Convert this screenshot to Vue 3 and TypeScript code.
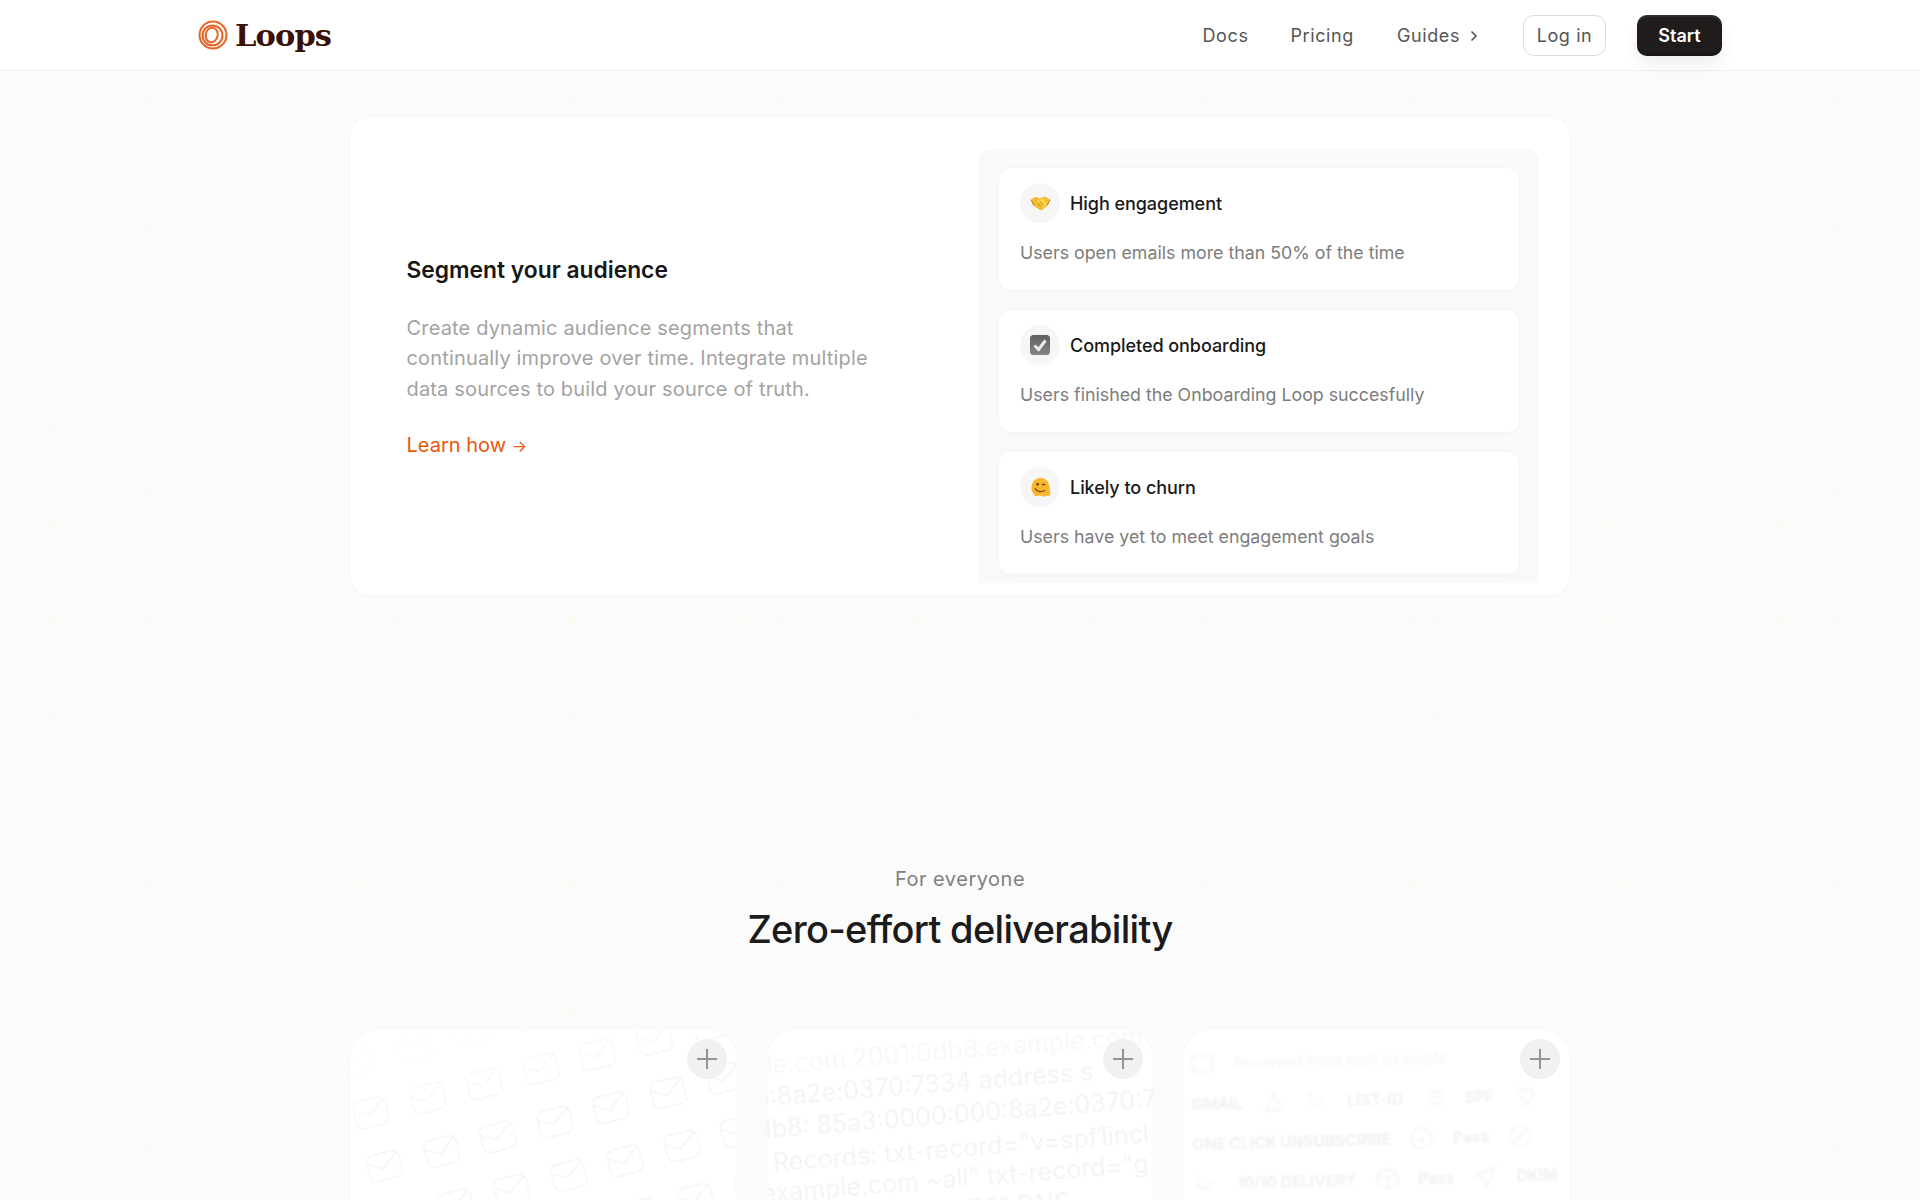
<script setup lang="ts">
interface Segment { title: string; desc: string; icon: 'hands' | 'check' | 'melt' }
const segments: Segment[] = [
  { title: 'High engagement', desc: 'Users open emails more than 50% of the time', icon: 'hands' },
  { title: 'Completed onboarding', desc: 'Users finished the Onboarding Loop succesfully', icon: 'check' },
  { title: 'Likely to churn', desc: 'Users have yet to meet engagement goals', icon: 'melt' },
]
const envelopes = Array.from({ length: 64 }, (_, i) => i)
const records = [
  'ple.com 2001:0db8:example.com',
  '0:8a2e:0370:7334 address s',
  'db8: 85a3:0000:000:8a2e:0370:7',
  '  Records: txt-record="v=spf1incl',
  'example.com ~all" txt-record="g',
  '                 ="123456" DNS',
]
</script>

<template>
  <div class="page">
    <header class="topbar">
      <div class="topbar-inner">
        <a class="brand">
          <svg class="brand-mark" viewBox="0 0 32 32" fill="none" stroke="#e4672a" stroke-width="2.200">
            <circle cx="16" cy="16" r="14.400" />
            <ellipse cx="15.500" cy="16.400" rx="10.600" ry="10.600" />
            <ellipse cx="14.600" cy="16" rx="6.400" ry="7.800" transform="rotate(12 14.600 16)" />
          </svg>
          <span class="brand-name">Loops</span>
        </a>
        <nav class="nav">
          <a class="nav-link first">Docs</a>
          <a class="nav-link">Pricing</a>
          <a class="nav-link guides">Guides
            <svg viewBox="0 0 10 14" class="chev" fill="none" stroke="#4c4c4c" stroke-width="1.500"><path d="M2.500 2.500 7 7l-4.500 4.500" /></svg>
          </a>
          <a class="btn-login">Log in</a>
          <a class="btn-start">Start</a>
        </nav>
      </div>
    </header>

    <main class="main">
      <section class="feature">
        <div class="feature-copy">
          <h3>Segment your audience</h3>
          <p>Create dynamic audience segments that continually improve over time. Integrate multiple data sources to build your source of truth.</p>
          <a class="learn">Learn how <span class="arrow">→</span></a>
        </div>
        <div class="panel">
          <article v-for="s in segments" :key="s.title" class="seg">
            <div class="seg-head">
              <span class="seg-icon">
                <svg v-if="s.icon === 'hands'" viewBox="0 0 22 16" width="21" height="16">
                  <path d="M1 4.500 5.500 1.500 10 3l2-.8L16.500 1.500 21 4.500l-2.500 6-5.500 4.500c-1 .6-2 .6-3 0L3.500 10.500z" fill="#f5b82e" />
                  <path d="M6 6.500 11 3.500l3.500 0 4 6-4.500 3.500" fill="#fcd34d" />
                  <path d="M8 8l4 3.500M10 6.500l4.500 4M1 4.500l3 6M21 4.500l-3 6" stroke="#b9770e" stroke-width=".9" fill="none" />
                </svg>
                <svg v-else-if="s.icon === 'check'" viewBox="0 0 20 20" width="20" height="20">
                  <defs>
                    <linearGradient id="boxfill" x1="0" y1="0" x2="0" y2="1">
                      <stop offset="0" stop-color="#5f5f5f" />
                      <stop offset="1" stop-color="#858585" />
                    </linearGradient>
                  </defs>
                  <rect width="20" height="20" rx="3.500" fill="url(#boxfill)" />
                  <path d="M4.500 10.500 8.500 14.500 15.500 5.500" fill="none" stroke="#ececec" stroke-width="3" />
                </svg>
                <svg v-else viewBox="0 0 20 20" width="21" height="21">
                  <path d="M10 .8a8.600 8.600 0 0 1 8.600 8.600c0 3 .9 4.600.9 6.600 0 1.500-1.700 2.600-3.300 1.800-1-.5-1.700.9-3.300.9-1.500 0-2-1-3.400-1-1.700 0-2.500 1-4 .5C3.200 17.500 4 16 2.800 15 1.600 14 1.400 11.500 1.400 9.400A8.600 8.600 0 0 1 10 .8z" fill="#f8b62d" />
                  <path d="M4.700 10.800c1.600 3.500 6.800 4.200 9.800 1.700" fill="none" stroke="#7b4a0c" stroke-width="1.200" />
                  <circle cx="7.300" cy="6.800" r="1.200" fill="#5b3608" />
                  <path d="M11.500 7.500c1-.6 2-.6 3-.2" fill="none" stroke="#5b3608" stroke-width="1.200" />
                </svg>
              </span>
              <span class="seg-title">{{ s.title }}</span>
            </div>
            <p class="seg-desc">{{ s.desc }}</p>
          </article>
        </div>
      </section>

      <section class="intro">
        <p class="eyebrow">For everyone</p>
        <h2>Zero-effort deliverability</h2>
      </section>

      <section class="tiles">
        <article class="tile">
          <div class="env-art">
            <svg v-for="n in envelopes" :key="n" viewBox="0 0 34 28" width="36" height="29" fill="none" stroke="#f4f4f4" stroke-width="1.300">
              <rect x="1" y="1" width="32" height="26" rx="6" />
              <path d="M1.500 8 15 16 32 3" />
            </svg>
          </div>
          <span class="plus"><svg viewBox="0 0 20 20" width="20" height="20"><path d="M10 0v20M0 10h20" stroke="#949494" stroke-width="2" /></svg></span>
        </article>
        <article class="tile">
          <div class="rec-art">
            <div v-for="(r, i) in records" :key="i" class="rec-line">{{ r }}</div>
          </div>
          <span class="plus"><svg viewBox="0 0 20 20" width="20" height="20"><path d="M10 0v20M0 10h20" stroke="#949494" stroke-width="2" /></svg></span>
        </article>
        <article class="tile">
          <div class="tag-art">
            <div class="tag-row faint">
              <svg viewBox="0 0 24 24" width="24" height="24"><rect x="2" y="4" width="20" height="16" rx="3" /></svg>
              <b>Received from mail.example</b>
            </div>
            <div class="tag-row">
              <b>GMAIL</b>
              <svg viewBox="0 0 24 24" width="24" height="24"><path d="M3 20 12 4l9 16z" /></svg>
              <svg viewBox="0 0 24 24" width="24" height="24"><path d="M6 3c-3 8 0 14 6 14s6-5 6-8" /></svg>
              <b>LIST-ID</b>
              <svg viewBox="0 0 24 24" width="24" height="24"><path d="M8 6h14M8 12h14M8 18h14" /></svg>
              <b>SPF</b>
              <svg viewBox="0 0 24 24" width="24" height="24"><path d="M4 6h14l3 4-8 12z" /></svg>
            </div>
            <div class="tag-row">
              <b>ONE CLICK UNSUBSCRIBE</b>
              <svg viewBox="0 0 24 24" width="24" height="24"><circle cx="12" cy="12" r="10" /><path d="m8 13 3 3 5-7" /></svg>
              <b>Pass</b>
              <svg viewBox="0 0 24 24" width="24" height="24"><circle cx="12" cy="12" r="10" /><path d="m7 11 4 4 7-8" /></svg>
            </div>
            <div class="tag-row">
              <svg viewBox="0 0 24 24" width="24" height="24"><path d="M5 3c-3 8 0 14 6 14s6-5 6-8" /></svg>
              <b>10/10 DELIVERY</b>
              <svg viewBox="0 0 24 24" width="24" height="24"><path d="m12 2 10 5v10l-10 5-10-5V7zM2 7l10 5 10-5M12 12v10" /></svg>
              <b>Pass</b>
              <svg viewBox="0 0 24 24" width="24" height="24"><path d="M22 2 2 11l8 3 4 8z" /></svg>
              <b>DKIM</b>
            </div>
          </div>
          <span class="plus"><svg viewBox="0 0 20 20" width="20" height="20"><path d="M10 0v20M0 10h20" stroke="#949494" stroke-width="2" /></svg></span>
        </article>
      </section>
    </main>
  </div>
</template>

<style>
html, body { margin: 0; background: #fbfbfb; }
</style>

<style scoped>
.page {
  height: 1200px;
  overflow: hidden;
  background-color: #fbfbfb;
  background-image:
    radial-gradient(circle at 30% 40%, rgba(252, 246, 170, .14) 0, transparent 5px),
    radial-gradient(circle at 70% 75%, rgba(252, 246, 170, .1) 0, transparent 6px);
  background-size: 173px 97px, 211px 131px;
  font-family: Inter, "Liberation Sans", sans-serif;
  color: #161616;
}
.topbar { height: 70px; background: #fff; border-bottom: 1px solid #f1f1f0; }
.topbar-inner {
  height: 100%;
  box-sizing: border-box;
  padding: 0 198px;
  display: flex;
  align-items: center;
  justify-content: space-between;
}
.brand { display: flex; align-items: center; gap: 7px; }
.brand-mark { width: 30px; height: 30px; display: block; }
.brand-name {
  font-family: "DejaVu Serif", "Liberation Serif", serif;
  font-weight: 700;
  font-size: 30.500px;
  letter-spacing: -0.9px;
  color: #3a1106;
}
.nav { display: flex; align-items: center; font-size: 18px; letter-spacing: 0.6px; color: #555; }
.nav-link { margin-right: 43px; }
.nav-link.first { margin-right: 42px; }
.guides { display: flex; align-items: center; gap: 9px; margin-right: 44px; }
.chev { width: 10px; height: 14px; margin-top: 2px; }
.btn-login {
  box-sizing: border-box;
  width: 83px; height: 41px;
  display: flex; align-items: center; justify-content: center;
  border: 1.500px solid #dcdcdc;
  border-radius: 11px;
  background: #fff;
  margin-right: 31px;
}
.btn-start {
  width: 85px; height: 41px;
  display: flex; align-items: center; justify-content: center;
  border-radius: 10px;
  background: #1f1c1b;
  color: #fff;
  font-weight: 600;
  letter-spacing: 0;
  box-shadow: 0 8px 16px rgba(0,0,0,.07), inset 0 -2px 3px rgba(0,0,0,.3), inset 0 2px 2px rgba(255,255,255,.1);
}
.main { width: 1220px; margin: 0 auto; padding-top: 46px; }
.feature {
  box-sizing: border-box;
  height: 478px;
  background: #fff;
  border-radius: 20px;
  box-shadow: 0 0 0 1px #f6f6f5, 0 2px 6px rgba(0,0,0,.015);
  padding: 32px 31px 12px 56.500px;
  display: flex;
  justify-content: space-between;
}
.feature-copy { width: 480px; display: flex; flex-direction: column; justify-content: center; padding-bottom: 16px; }
.feature-copy h3 { margin: 0 0 28px; font-size: 22.800px; line-height: 30px; font-weight: 600; color: #161616; }
.feature-copy p { margin: 0 0 26px; font-size: 20px; letter-spacing: 0.16px; line-height: 30.500px; color: #a3a3a3; }
.learn { font-size: 20px; line-height: 30px; color: #ea580c; }
.arrow { font-size: 16px; }
.panel {
  box-sizing: border-box;
  width: 560px;
  background: #f9f9f9;
  border-radius: 12px 12px 0 0;
  padding: 19px 20px 9px;
  display: flex;
  flex-direction: column;
  gap: 20px;
}
.seg {
  box-sizing: border-box;
  height: 122px;
  background: #fff;
  border-radius: 12px;
  box-shadow: 0 0 0 1px #f4f4f4, 0 1px 3px rgba(0,0,0,.03);
  padding: 15px 21px;
}
.seg-head { display: flex; align-items: center; gap: 10px; }
.seg-icon {
  width: 40px; height: 40px;
  border-radius: 50%;
  background: #f6f6f6;
  display: flex; align-items: center; justify-content: center;
}
.seg-title { font-size: 18px; font-weight: 500; letter-spacing: -0.05px; color: #1a1a1a; }
.seg-desc { margin: 17px 0 0; font-size: 17.800px; line-height: 26px; color: #7c7c7c; }
.intro { padding-top: 270px; text-align: center; }
.eyebrow { margin: 0; font-size: 20px; line-height: 28px; letter-spacing: 0.5px; color: #808080; }
.intro h2 { margin: 10px 0 0; font-size: 38px; line-height: 52px; font-weight: 500; letter-spacing: -0.7px; color: #1b1b1b; }
.tiles { margin-top: 74px; display: grid; grid-template-columns: repeat(3, 1fr); gap: 30px; }
.tile {
  position: relative;
  height: 400px;
  background: #fff;
  border-radius: 30px;
  box-shadow: 0 0 0 1px #f7f7f7;
  overflow: hidden;
}
.plus {
  position: absolute;
  top: 10px; right: 10px;
  width: 40px; height: 40px;
  border-radius: 50%;
  background: #f1f1f0;
  display: flex; align-items: center; justify-content: center;
}
.env-art {
  position: absolute;
  left: -20px; top: -2px;
  width: 480px;
  display: grid;
  grid-template-columns: repeat(8, 58.500px);
  row-gap: 26px;
  transform: rotate(-14.500deg);
  transform-origin: 0 0;
  padding-top: 24px;
  filter: blur(.4px);
  -webkit-mask-image: linear-gradient(to bottom, transparent 20px, #000 115px);
  mask-image: linear-gradient(to bottom, transparent 20px, #000 115px);
}
.rec-art {
  position: absolute;
  left: -10px; top: 2px;
  width: 480px;
  transform: rotate(-4.500deg);
  font-size: 25px;
  line-height: 32px;
  white-space: pre;
  color: #f4f4f4;
  filter: blur(.6px);
}
.rec-line:first-child { color: #f8f8f8; }
.rec-line:nth-child(4) { position: relative; top: 2px; }
.tag-art {
  position: absolute;
  left: 9px; top: 10px;
  width: 390px;
  transform: rotate(-1.500deg);
  color: #f1f1f1;
  font-size: 15.500px;
  filter: blur(.9px);
}
.tag-art svg { fill: none; stroke: #f3f3f3; stroke-width: 1.500; flex: none; }
.tag-art b { font-weight: 700; white-space: nowrap; }
.tag-row { display: flex; align-items: center; gap: 19px; height: 40px; }
.tag-row.faint { color: #f8f8f8; }
</style>
